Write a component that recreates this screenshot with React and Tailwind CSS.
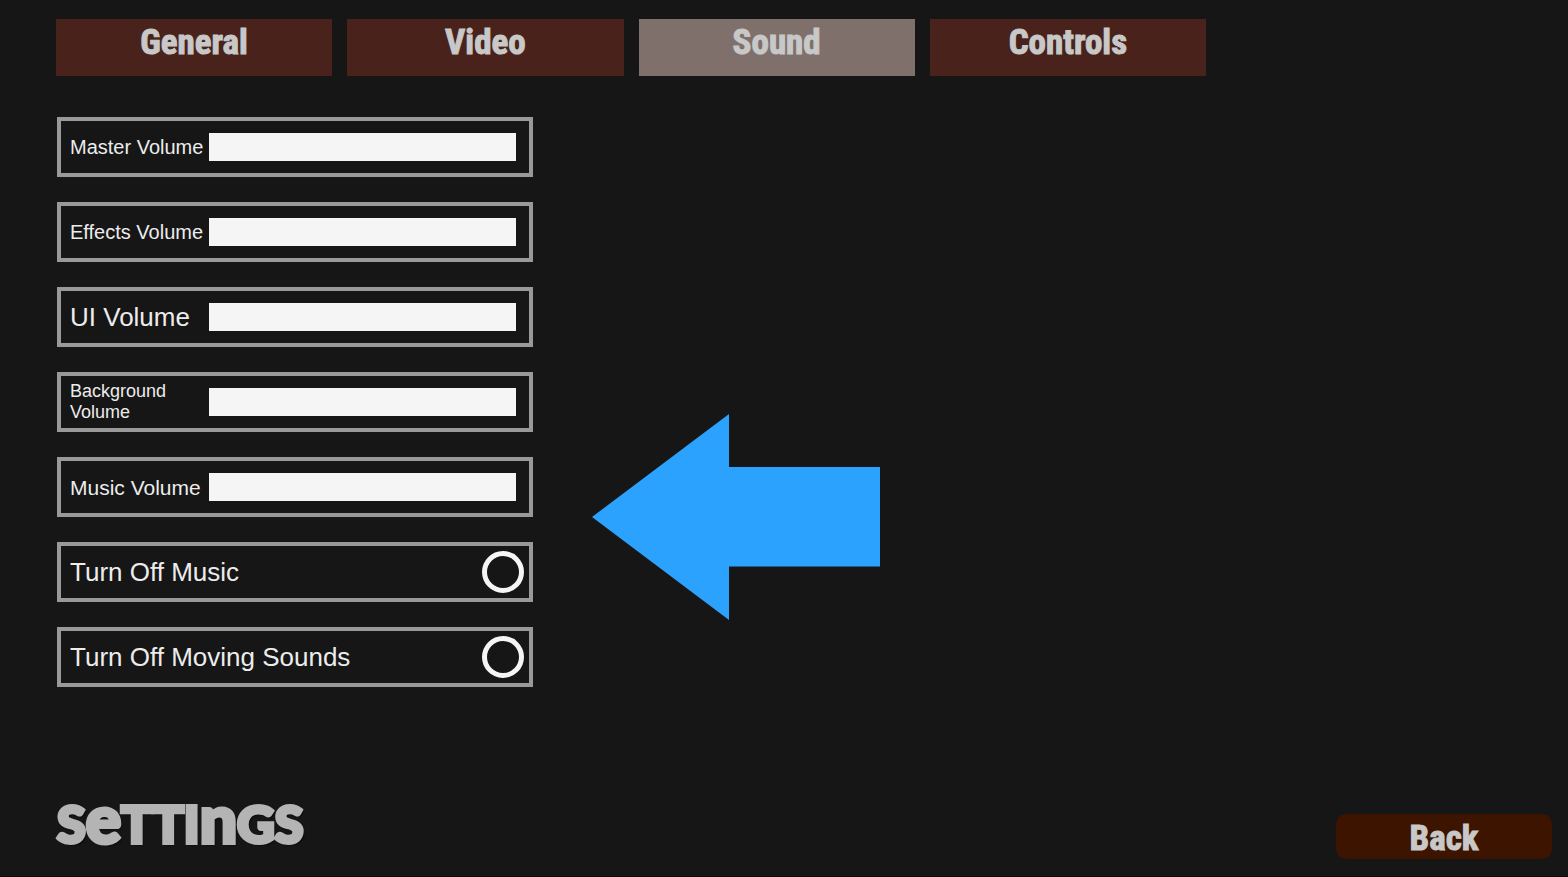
import { useState } from "react";

const tabs = ["General", "Video", "Sound", "Controls"];

const volumes = [
  { id: "master", label: "Master Volume", size: "text-[20px]" },
  { id: "effects", label: "Effects Volume", size: "text-[20px]" },
  { id: "ui", label: "UI Volume", size: "text-[26px]" },
  { id: "background", label: "Background Volume", size: "text-[18px]" },
  { id: "music", label: "Music Volume", size: "text-[21px]" },
];

const toggles = [
  { id: "music-off", label: "Turn Off Music" },
  { id: "moving-off", label: "Turn Off Moving Sounds" },
];

const displayFont =
  "font-['Roboto_Condensed','Liberation_Sans_Narrow','DejaVu_Sans_Condensed',sans-serif] font-bold text-[35px] leading-[45px] text-[#c8c8c8] [-webkit-text-stroke:1px_#c8c8c8]";

const row =
  "flex h-[60px] items-center justify-between border-4 border-[#999999] pl-[9px]";

function VolumeRow({ id, label, size }) {
  const [value, setValue] = useState(100);
  return (
    <div className={`${row} pr-[13px]`}>
      <label htmlFor={id} className={`w-[134px] leading-[21px] ${size}`}>
        {label}
      </label>
      <input
        id={id}
        type="range"
        min="0"
        max="100"
        value={value}
        onChange={(e) => setValue(Number(e.target.value))}
        style={{
          backgroundImage: `linear-gradient(to right, #f5f5f5 ${value}%, #3a3a3a ${value}%)`,
        }}
        className="h-7 w-[307px] cursor-pointer appearance-none [&::-webkit-slider-thumb]:size-0 [&::-webkit-slider-thumb]:appearance-none"
      />
    </div>
  );
}

function ToggleRow({ id, label }) {
  return (
    <div className={`${row} pr-[5px]`}>
      <label htmlFor={id} className="text-[26px] leading-[30px]">
        {label}
      </label>
      <input
        id={id}
        type="checkbox"
        className="size-[42px] cursor-pointer appearance-none rounded-full border-[5px] border-[#f5f5f5] checked:bg-[#999999]"
      />
    </div>
  );
}

export default function App() {
  const [active, setActive] = useState("Sound");
  return (
    <div className="flex min-h-screen flex-col border-b border-[#0e060a] bg-[#161616] pt-[19px] pb-[17px] font-['Liberation_Sans',Arial,sans-serif] text-[#ececec]">
      <nav className="ml-14 grid max-w-[1150px] grid-cols-4 gap-[15px]">
        {tabs.map((tab) => (
          <button
            key={tab}
            type="button"
            onClick={() => setActive(tab)}
            className={`flex h-[57px] items-start justify-center pt-px ${displayFont} ${
              tab === active ? "bg-[#7f706b]" : "bg-[#49231b]"
            }`}
          >
            {tab}
          </button>
        ))}
      </nav>

      <main className="mt-[41px] mb-10 ml-[57px] flex items-start gap-[59px]">
        <section className="flex w-[476px] flex-col gap-[25px]">
          {volumes.map((v) => (
            <VolumeRow key={v.id} {...v} />
          ))}
          {toggles.map((t) => (
            <ToggleRow key={t.id} {...t} />
          ))}
        </section>
        <svg
          className="mt-[297px] h-[206px] w-[288px] shrink-0"
          viewBox="0 0 288 206"
          aria-hidden="true"
        >
          <path d="M0 103 137 0V53H288V152.500H137V206Z" fill="#2ca2ff" />
        </svg>
      </main>

      <footer className="mt-auto flex items-end justify-between pr-4 pl-[57px]">
        <h1 className="pb-1 font-[Lato,sans-serif] text-[52px] leading-[64px] font-black text-[#b4b4b4] [-webkit-text-stroke:4px_#b4b4b4] [text-shadow:2px_2px_2px_#000]">
          S<span className="text-[66px]">e</span>TTI
          <span className="text-[66px]">n</span>GS
        </h1>
        <button
          type="button"
          className={`flex h-[45px] w-[216px] items-center justify-center rounded-[10px] bg-[#3d1400] pt-[3px] ${displayFont}`}
        >
          Back
        </button>
      </footer>
    </div>
  );
}
